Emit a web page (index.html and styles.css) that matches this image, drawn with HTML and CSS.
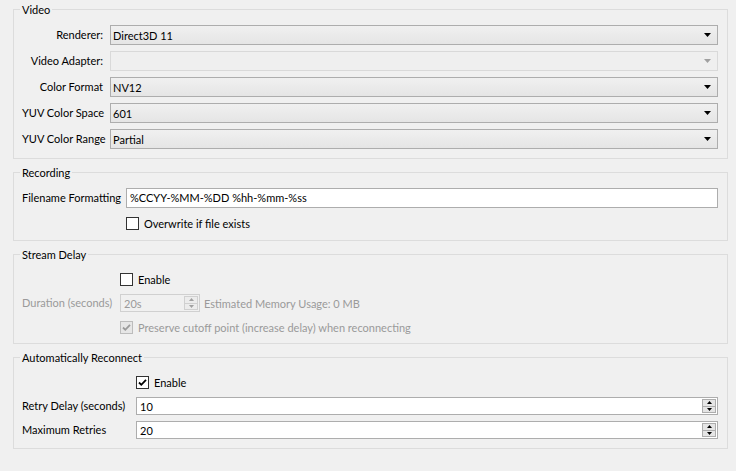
FILE: index.html
```html
<!DOCTYPE html>
<html>
<head>
<meta charset="utf-8">
<link rel="stylesheet" href="styles.css">
</head>
<body>
<div class="page">
  <fieldset class="group video">
    <legend>Video</legend>
    <div class="form">
      <div class="lbl right">Renderer:</div>
      <div class="combo"><span>Direct3D 11</span><svg class="arrow" width="7" height="4" viewBox="0 0 7 4"><polygon points="0,0 7,0 3.5,4" fill="#000"/></svg></div>
      <div class="lbl right">Video Adapter:</div>
      <div class="combo disabled"><span></span><svg class="arrow" width="7" height="4" viewBox="0 0 7 4"><polygon points="0,0 7,0 3.5,4" fill="#a0a0a0"/></svg></div>
      <div class="lbl right">Color Format</div>
      <div class="combo"><span>NV12</span><svg class="arrow" width="7" height="4" viewBox="0 0 7 4"><polygon points="0,0 7,0 3.5,4" fill="#000"/></svg></div>
      <div class="lbl right">YUV Color Space</div>
      <div class="combo"><span>601</span><svg class="arrow" width="7" height="4" viewBox="0 0 7 4"><polygon points="0,0 7,0 3.5,4" fill="#000"/></svg></div>
      <div class="lbl right">YUV Color Range</div>
      <div class="combo"><span>Partial</span><svg class="arrow" width="7" height="4" viewBox="0 0 7 4"><polygon points="0,0 7,0 3.5,4" fill="#000"/></svg></div>
    </div>
  </fieldset>

  <fieldset class="group recording">
    <legend>Recording</legend>
    <div class="form">
      <div class="lbl">Filename Formatting</div>
      <div class="edit">%CCYY-%MM-%DD %hh-%mm-%ss</div>
      <div></div>
      <div class="check"><span class="cb"></span><span>Overwrite if file exists</span></div>
    </div>
  </fieldset>

  <fieldset class="group delay">
    <legend>Stream Delay</legend>
    <div class="form">
      <div></div>
      <div class="check"><span class="cb"></span><span>Enable</span></div>
      <div class="lbl dis">Duration (seconds)</div>
      <div class="inline">
        <div class="spin disabled"><span class="val">20s</span>
          <div class="btns"><div class="sb"><svg width="5" height="3" viewBox="0 0 5 3"><polygon points="0,3 5,3 2.5,0" fill="#a0a0a0"/></svg></div><div class="sb"><svg width="5" height="3" viewBox="0 0 5 3"><polygon points="0,0 5,0 2.5,3" fill="#a0a0a0"/></svg></div></div>
        </div>
        <span class="dis est">Estimated Memory Usage: 0 MB</span>
      </div>
      <div></div>
      <div class="check dis"><span class="cb checked disabled"><svg width="11" height="11" viewBox="0 0 11 11"><path d="M2 5.5 L4.3 7.8 L9 2.8" fill="none" stroke="#9a9a9a" stroke-width="1.8"/></svg></span><span>Preserve cutoff point (increase delay) when reconnecting</span></div>
    </div>
  </fieldset>

  <fieldset class="group reconnect">
    <legend>Automatically Reconnect</legend>
    <div class="form">
      <div></div>
      <div class="check"><span class="cb checked"><svg width="11" height="11" viewBox="0 0 11 11"><path d="M2 5.5 L4.3 7.8 L9 2.8" fill="none" stroke="#000" stroke-width="1.8"/></svg></span><span>Enable</span></div>
      <div class="lbl">Retry Delay (seconds)</div>
      <div class="spin"><span class="val">10</span>
        <div class="btns"><div class="sb"><svg width="5" height="3" viewBox="0 0 5 3"><polygon points="0,3 5,3 2.5,0" fill="#000"/></svg></div><div class="sb"><svg width="5" height="3" viewBox="0 0 5 3"><polygon points="0,0 5,0 2.5,3" fill="#000"/></svg></div></div>
      </div>
      <div class="lbl">Maximum Retries</div>
      <div class="spin"><span class="val">20</span>
        <div class="btns"><div class="sb"><svg width="5" height="3" viewBox="0 0 5 3"><polygon points="0,3 5,3 2.5,0" fill="#000"/></svg></div><div class="sb"><svg width="5" height="3" viewBox="0 0 5 3"><polygon points="0,0 5,0 2.5,3" fill="#000"/></svg></div></div>
      </div>
    </div>
  </fieldset>
</div>
</body>
</html>
```

FILE: styles.css
```css
* { box-sizing: border-box; }
html, body { margin: 0; padding: 0; }
body {
  background: #f0f0f0;
  font-family: Lato, "Open Sans", sans-serif;
  font-size: 11px;
  color: #000;
  width: 736px;
  height: 471px;
  overflow: hidden;
}
.page { padding: 1px 8px 0 13px; }

.group {
  border: 1px solid #dcdcdc;
  margin: 0 0 5px 0;
  padding: 7px 9px 9px 8px;
  min-width: 0;
}
.group legend {
  padding: 0 2px;
  margin-left: -2px;
  height: 17px;
  line-height: 17px;
}
.recording { padding-bottom: 8px; }
.delay { padding-bottom: 7px; }
.reconnect { margin-bottom: 0; }

.form {
  display: grid;
  column-gap: 7px;
  row-gap: 6px;
  align-items: center;
}
.video .form { grid-template-columns: 81px 1fr; }
.recording .form { grid-template-columns: 97px 1fr; }
.delay .form { grid-template-columns: 91px 1fr; }
.reconnect .form { grid-template-columns: 107px 1fr; }

.lbl { white-space: nowrap; line-height: 16px; }
.lbl.right { text-align: right; }
.dis { color: #9a9a9a; }

.combo {
  height: 20px;
  border: 1px solid #adadad;
  background: linear-gradient(#f0f0f0, #e5e5e5);
  display: flex;
  align-items: center;
  justify-content: space-between;
  padding-left: 2px;
}
.combo.disabled {
  border-color: #d9d9d9;
  background: #efefef;
}
.combo .arrow { margin-right: 6px; }

.edit {
  height: 20px;
  border: 1px solid #adadad;
  background: #fff;
  padding-left: 3px;
  line-height: 18px;
}

.check {
  height: 18px;
  display: flex;
  align-items: center;
  gap: 5px;
  white-space: nowrap;
}
.cb {
  width: 13px;
  height: 13px;
  border: 1px solid #333;
  background: #fff;
  display: flex;
  align-items: center;
  justify-content: center;
  flex: none;
}
.cb.disabled {
  border-color: #bcbcbc;
  background: #e6e6e6;
}

.inline { display: flex; align-items: center; gap: 4px; }

.spin {
  height: 18px;
  border: 1px solid #adadad;
  background: #fff;
  display: flex;
  align-items: center;
  justify-content: space-between;
  padding: 0 1px 0 3px;
}
.spin.disabled {
  width: 80px;
  border-color: #d0d0d0;
  background: #f0f0f0;
  color: #9a9a9a;
}
.btns {
  display: flex;
  flex-direction: column;
  width: 14px;
  height: 14px;
}
.sb {
  flex: 1;
  border: 1px solid #adadad;
  background: #e5e5e5;
  display: flex;
  align-items: center;
  justify-content: center;
}
.sb + .sb { border-top: none; }
.spin.disabled .sb { border-color: #d0d0d0; background: #ececec; }
```
